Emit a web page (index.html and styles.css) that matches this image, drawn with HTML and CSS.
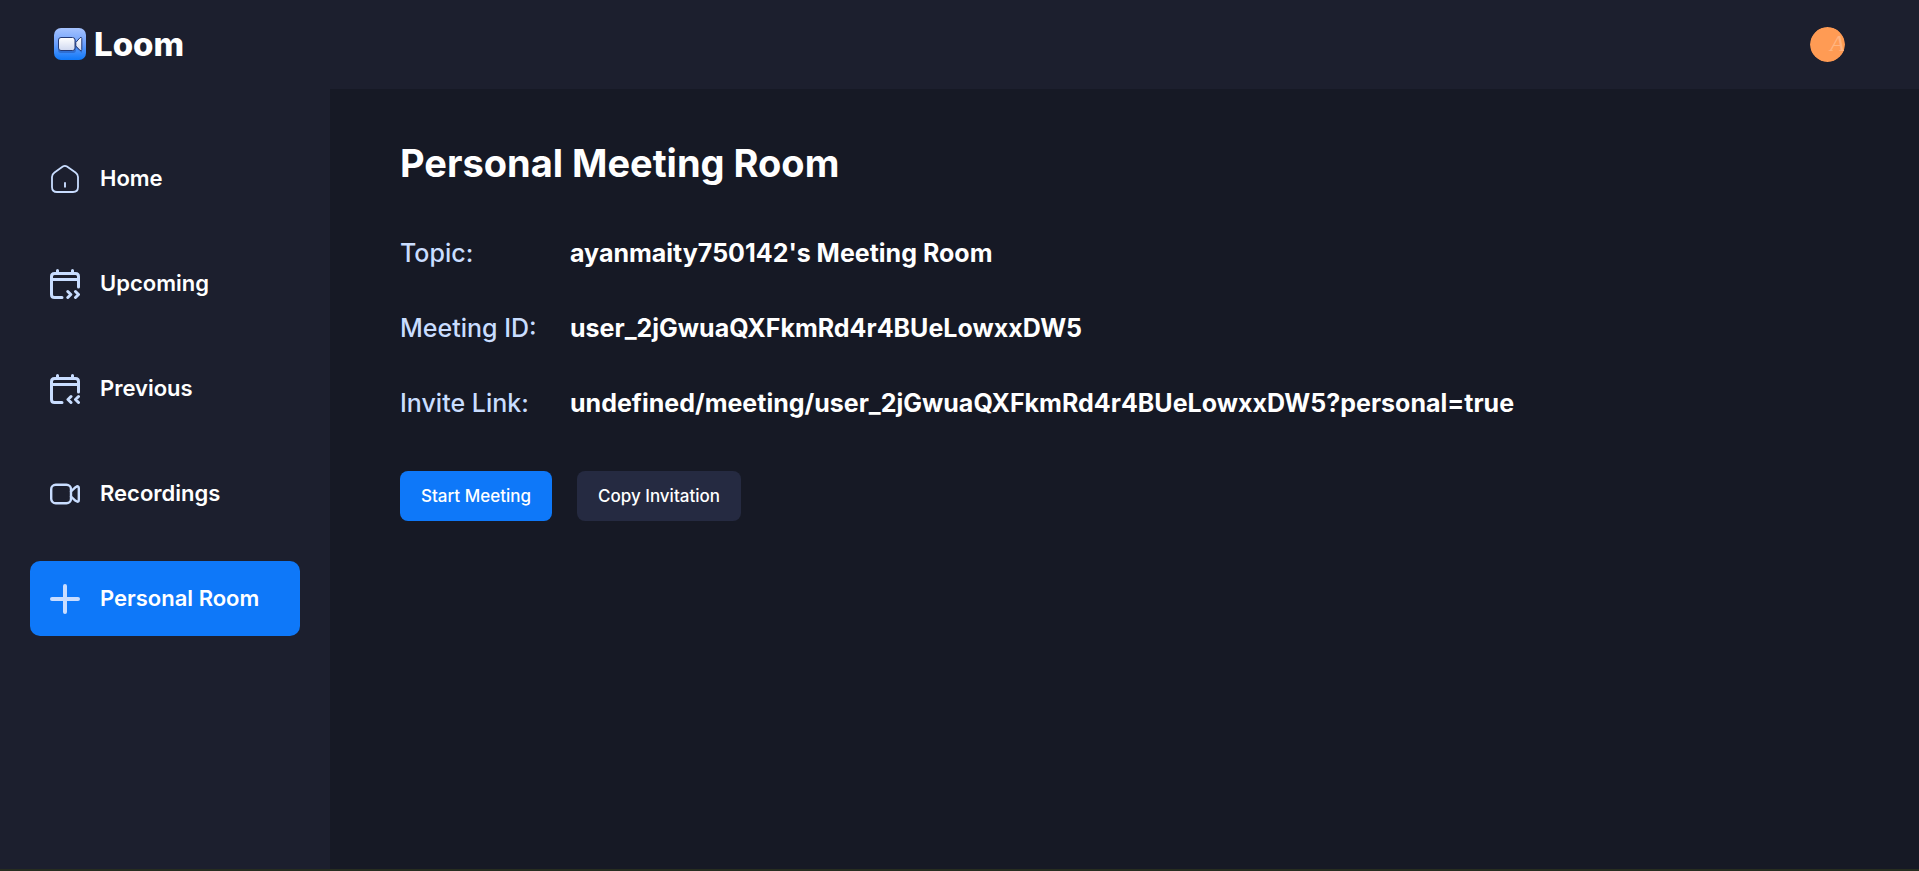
FILE: index.html
```html
<!DOCTYPE html>
<html lang="en">
<head>
<meta charset="utf-8">
<meta name="viewport" content="width=device-width, initial-scale=1">
<title>Loom</title>
<link rel="stylesheet" href="styles.css">
</head>
<body>
<div class="app">
  <header class="topbar">
    <a class="brand" href="#">
      <svg class="brand-mark" viewBox="0 0 32 32" aria-hidden="true">
        <defs>
          <linearGradient id="tile" x1="0" y1="0" x2="0" y2="1">
            <stop offset="0" stop-color="#a6c3ff"/>
            <stop offset="0.5" stop-color="#6a9ffc"/>
            <stop offset="1" stop-color="#0e78f9"/>
          </linearGradient>
          <linearGradient id="camera" x1="0" y1="0" x2="0" y2="1">
            <stop offset="0" stop-color="#ffffff"/>
            <stop offset="1" stop-color="#cfd8f0"/>
          </linearGradient>
        </defs>
        <rect width="32" height="32" rx="7" fill="url(#tile)"/>
        <g fill="#173a8c" opacity="0.35">
          <rect x="4" y="10" width="18" height="15" rx="3"/>
          <path d="M21 16 28 10V25L21 19Z"/>
        </g>
        <g fill="url(#camera)" stroke="#233a78" stroke-width="1" stroke-linejoin="round">
          <path d="M21.800 14.500 26 9.700Q27.800 8.800 27.800 10.500V21.500Q27.800 23.300 26 22.300L21.800 18Z"/>
          <rect x="4.500" y="9.500" width="16.500" height="13" rx="2.500"/>
        </g>
      </svg>
      <span>Loom</span>
    </a>
    <button class="avatar" type="button" aria-label="Open user menu">
      <svg viewBox="0 0 35 35" aria-hidden="true">
        <circle cx="17.500" cy="17.500" r="17.500" fill="#ff9b54"/>
        <text class="avatar-letter" x="20" y="24">A</text>
      </svg>
    </button>
  </header>

  <div class="body">
    <nav class="sidebar" aria-label="Main">
      <a class="nav-item" href="#">
        <svg class="icon" viewBox="0 0 30 30" aria-hidden="true">
          <path d="M12.800 2.600Q14.900 1.300 17 2.600L25.500 8.500Q28 10.300 28 13V23Q28 28 23 28H7Q2 28 2 23V13Q2 10.300 4.500 8.500Z" stroke-width="1.800"/>
          <path d="M15 18.200V23.500" stroke-width="1.900" stroke-linecap="butt"/>
        </svg>
        <span>Home</span>
      </a>
      <a class="nav-item" href="#">
        <svg class="icon" viewBox="0 0 30 30" aria-hidden="true">
          <path d="M12 28.500H4.500Q1.500 28.500 1.500 25.500V7.500Q1.500 4.500 4.500 4.500H25.500Q28.500 4.500 28.500 7.500V18M1.500 10.500H28.500M7.500 1.500V4.500M22.500 1.500V4.500M17.800 22.500 20.800 25.500 17.800 28.500M25.500 22.500 28.500 25.500 25.500 28.500"/>
        </svg>
        <span>Upcoming</span>
      </a>
      <a class="nav-item" href="#">
        <svg class="icon" viewBox="0 0 30 30" aria-hidden="true">
          <path d="M12 28.500H4.500Q1.500 28.500 1.500 25.500V7.500Q1.500 4.500 4.500 4.500H25.500Q28.500 4.500 28.500 7.500V18M1.500 10.500H28.500M7.500 1.500V4.500M22.500 1.500V4.500M21 22.500 18 25.500 21 28.500M28.500 22.500 25.500 25.500 28.500 28.500"/>
        </svg>
        <span>Previous</span>
      </a>
      <a class="nav-item" href="#">
        <svg class="icon" viewBox="0 0 30 30" aria-hidden="true">
          <rect x="1.200" y="5.700" width="19.800" height="18.600" rx="4.500" stroke-width="2.400"/>
          <path d="M21 12.300 25.600 8.200Q28.800 6 28.800 9V21Q28.800 24 25.600 21.800L21 17.700" stroke-width="2.400"/>
        </svg>
        <span>Recordings</span>
      </a>
      <a class="nav-item nav-item-active" href="#" aria-current="page">
        <svg class="icon" viewBox="0 0 30 30" aria-hidden="true">
          <path d="M15 2V28M2 15H28" stroke-width="4"/>
        </svg>
        <span>Personal Room</span>
      </a>
    </nav>

    <main class="content">
      <h1 class="title">Personal Meeting Room</h1>
      <dl class="details">
        <div class="detail"><dt>Topic:</dt><dd>ayanmaity750142's Meeting Room</dd></div>
        <div class="detail"><dt>Meeting ID:</dt><dd>user_2jGwuaQXFkmRd4r4BUeLowxxDW5</dd></div>
        <div class="detail"><dt>Invite Link:</dt><dd>undefined/meeting/user_2jGwuaQXFkmRd4r4BUeLowxxDW5?personal=true</dd></div>
      </dl>
      <div class="actions">
        <button class="button button-primary" type="button">Start Meeting</button>
        <button class="button" type="button">Copy Invitation</button>
      </div>
    </main>
  </div>
</div>
</body>
</html>
```

FILE: styles.css
```css
:root {
  --dark-1: #161925;
  --dark-2: #1c1f2e;
  --dark-3: #252a41;
  --blue: #0e78f9;
  --sky: #c9ddff;
}

* {
  box-sizing: border-box;
}

body {
  margin: 0;
  background: var(--dark-1);
  color: #fff;
  font-family: Inter, "Liberation Sans", sans-serif;
}

.app {
  display: flex;
  flex-direction: column;
  min-height: 100vh;
  border-bottom: 2px solid #272d20;
}

.topbar {
  display: flex;
  align-items: center;
  justify-content: space-between;
  padding: 27px 74px 27px 54px;
  background: var(--dark-2);
}

.brand {
  display: flex;
  align-items: center;
  gap: 8px;
  padding-bottom: 1px;
  color: #fff;
  font-size: 33px;
  line-height: 32px;
  font-weight: 800;
  text-decoration: none;
}

.brand-mark {
  width: 32px;
  height: 32px;
}

.avatar {
  display: flex;
  width: 35px;
  height: 35px;
  padding: 0;
  border: 0;
  border-radius: 50%;
  background: none;
  overflow: hidden;
}

.avatar svg {
  width: 100%;
  height: 100%;
}

.avatar-letter {
  fill: #ffb580;
  font-family: "Liberation Serif", serif;
  font-size: 24px;
  font-style: italic;
}

.body {
  display: flex;
  flex: 1;
}

.sidebar {
  display: flex;
  flex-direction: column;
  flex: none;
  gap: 30px;
  width: 330px;
  padding: 52px 30px 30px;
  background: var(--dark-2);
}

.nav-item {
  display: flex;
  align-items: center;
  gap: 20px;
  padding: 20px;
  border-radius: 10px;
  color: #fff;
  font-size: 22px;
  line-height: 35px;
  font-weight: 600;
  text-decoration: none;
}

.nav-item-active {
  background: var(--blue);
}

.icon {
  width: 30px;
  height: 30px;
  fill: none;
  stroke: var(--sky);
  stroke-width: 3;
  stroke-linecap: round;
  stroke-linejoin: round;
}

.content {
  flex: 1;
  min-width: 0;
  padding: 52px 70px;
}

.title {
  margin: 0;
  font-size: 38px;
  line-height: 45px;
  font-weight: 700;
}

.details {
  display: flex;
  flex-direction: column;
  gap: 40px;
  margin: 50px 0;
}

.detail {
  display: flex;
  gap: 10px;
  font-size: 25px;
  line-height: 35px;
}

.detail dt {
  flex: none;
  width: 160px;
  color: var(--sky);
  font-weight: 500;
}

.detail dd {
  margin: 0;
  font-weight: 700;
}

.actions {
  display: flex;
  gap: 25px;
}

.button {
  padding: 12px 21px;
  border: 0;
  border-radius: 8px;
  background: var(--dark-3);
  color: #fff;
  font-family: inherit;
  font-size: 17px;
  line-height: 26px;
  font-weight: 500;
}

.button-primary {
  background: var(--blue);
}
```
